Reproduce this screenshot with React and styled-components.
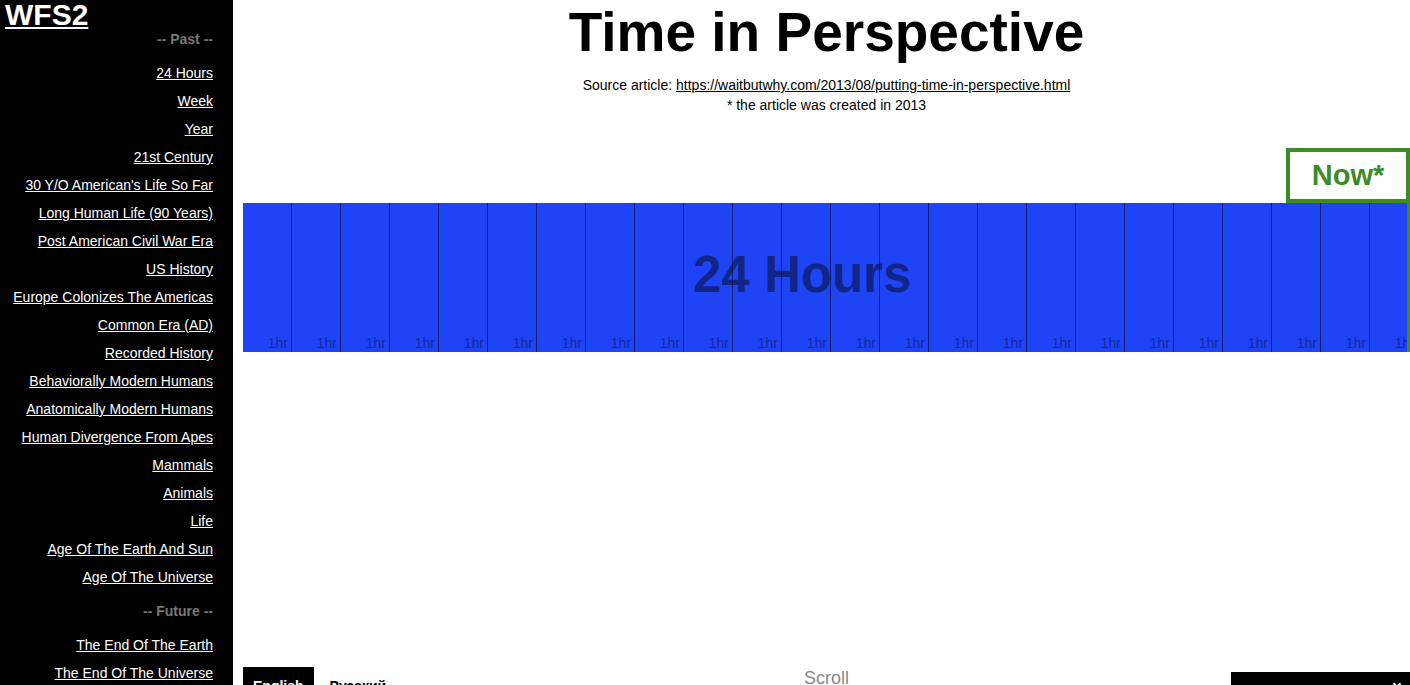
import React from 'react'
import styled, { createGlobalStyle } from 'styled-components'

const GlobalStyle = createGlobalStyle`
  html, body {
    margin: 0;
    padding: 0;
    background: #fff;
    font-family: "Liberation Sans", Arial, sans-serif;
  }
  * { box-sizing: border-box; }
`

const past = [
  '24 Hours',
  'Week',
  'Year',
  '21st Century',
  "30 Y/O American's Life So Far",
  'Long Human Life (90 Years)',
  'Post American Civil War Era',
  'US History',
  'Europe Colonizes The Americas',
  'Common Era (AD)',
  'Recorded History',
  'Behaviorally Modern Humans',
  'Anatomically Modern Humans',
  'Human Divergence From Apes',
  'Mammals',
  'Animals',
  'Life',
  'Age Of The Earth And Sun',
  'Age Of The Universe',
]

const future = ['The End Of The Earth', 'The End Of The Universe']

const hours = Array.from({ length: 24 })

function App() {
  return (
    <Page>
      <GlobalStyle />
      <Sidebar>
        <Logo href="#">WFS2</Logo>
        <NavHeading>-- Past --</NavHeading>
        {past.map((p) => (
          <NavLink key={p} href="#">{p}</NavLink>
        ))}
        <NavHeading $top>-- Future --</NavHeading>
        {future.map((p) => (
          <NavLink key={p} href="#">{p}</NavLink>
        ))}
      </Sidebar>
      <Main>
        <Header>
          <Title>Time in Perspective</Title>
          <Source>
            Source article: <a href="#">https://waitbutwhy.com/2013/08/putting-time-in-perspective.html</a>
          </Source>
          <Source>* the article was created in 2013</Source>
        </Header>
        <NowRow>
          <NowBox>Now*</NowBox>
        </NowRow>
        <Timeline>
          {hours.map((_, i) => (
            <Block key={i}>
              <BlockLabel>1hr</BlockLabel>
            </Block>
          ))}
          <TimelineTitle>24 Hours</TimelineTitle>
        </Timeline>
        <Footer>
          <Langs>
            <LangTab $active>English</LangTab>
            <LangTab>Русский</LangTab>
          </Langs>
          <ScrollHint>Scroll</ScrollHint>
          <SelectBox>
            <Chevron />
          </SelectBox>
        </Footer>
      </Main>
    </Page>
  )
}

const Page = styled.div`
  display: grid;
  grid-template-columns: 233px minmax(0, 1fr);
  height: 100vh;
  overflow: hidden;
`

const Sidebar = styled.nav`
  background: #000;
  display: flex;
  flex-direction: column;
  align-items: flex-end;
  padding: 0 20px 0 5px;
  overflow: hidden;
`

const Logo = styled.a`
  align-self: flex-start;
  color: #fff;
  font-size: 30px;
  font-weight: bold;
  line-height: 30px;
  text-decoration: underline;
  text-decoration-thickness: 2px;
  text-underline-offset: 2px;
`

const NavHeading = styled.div`
  color: #777;
  font-size: 14px;
  font-weight: bold;
  line-height: 18px;
  margin: ${(p) => (p.$top ? '11px' : '0')} 0 11px;
  flex-shrink: 0;
`

const NavLink = styled.a`
  color: #fff;
  font-size: 14px;
  line-height: 28px;
  text-decoration: underline;
  white-space: nowrap;
  flex-shrink: 0;
`

const Main = styled.main`
  display: flex;
  flex-direction: column;
  min-width: 0;
  padding-left: 10px;
  min-height: calc(100vh + 30px);
`

const Header = styled.header`
  text-align: center;
`

const Title = styled.h1`
  margin: 0 0 11px;
  font-size: 55px;
  line-height: 64px;
  font-weight: bold;
  color: #000;
`

const Source = styled.p`
  margin: 0;
  font-size: 14px;
  line-height: 20px;
  color: #000;
  a { color: #000; }
`

const NowRow = styled.div`
  display: flex;
  justify-content: flex-end;
  margin-top: 33px;
`

const NowBox = styled.div`
  width: 124px;
  height: 55px;
  border: 4px solid #3d8b24;
  display: flex;
  align-items: center;
  justify-content: center;
  color: #3d8b24;
  font-size: 29px;
  font-weight: bold;
`

const Timeline = styled.div`
  position: relative;
  display: flex;
  height: 149px;
  overflow: hidden;
  border-right: 3px solid #3d8b24;
`

const Block = styled.div`
  flex: 0 0 49px;
  background: #1e44f5;
  border-right: 1px solid rgba(0, 0, 0, 0.55);
  display: flex;
  align-items: flex-end;
  justify-content: flex-end;
  padding: 0 3px 0 0;
`

const BlockLabel = styled.span`
  font-size: 14px;
  line-height: 18px;
  color: rgba(0, 0, 0, 0.4);
`

const TimelineTitle = styled.div`
  position: absolute;
  top: 50%;
  left: 450px;
  transform: translateY(-50%);
  margin-top: -4px;
  font-size: 51px;
  font-weight: bold;
  color: rgba(0, 0, 0, 0.45);
  white-space: nowrap;
`

const Footer = styled.footer`
  margin-top: auto;
  display: grid;
  grid-template-columns: 1fr auto 1fr;
  align-items: start;
  height: 48px;
`

const Langs = styled.div`
  display: flex;
  gap: 6px;
`

const LangTab = styled.button`
  border: none;
  background: ${(p) => (p.$active ? '#000' : 'transparent')};
  color: ${(p) => (p.$active ? '#fff' : '#000')};
  font-family: "Liberation Sans", Arial, sans-serif;
  font-size: 14px;
  font-weight: bold;
  padding: 10px 10px;
  line-height: 18px;
`

const ScrollHint = styled.div`
  color: #888;
  font-size: 18px;
  line-height: 20px;
  margin-top: 1px;
`

const SelectBox = styled.div`
  justify-self: end;
  width: 179px;
  height: 36px;
  margin-top: 5px;
  background: #000;
  position: relative;
`

const Chevron = styled.span`
  position: absolute;
  right: 10px;
  top: 9px;
  width: 6px;
  height: 6px;
  border-right: 2px solid #fff;
  border-bottom: 2px solid #fff;
  transform: rotate(45deg);
`

export default App
